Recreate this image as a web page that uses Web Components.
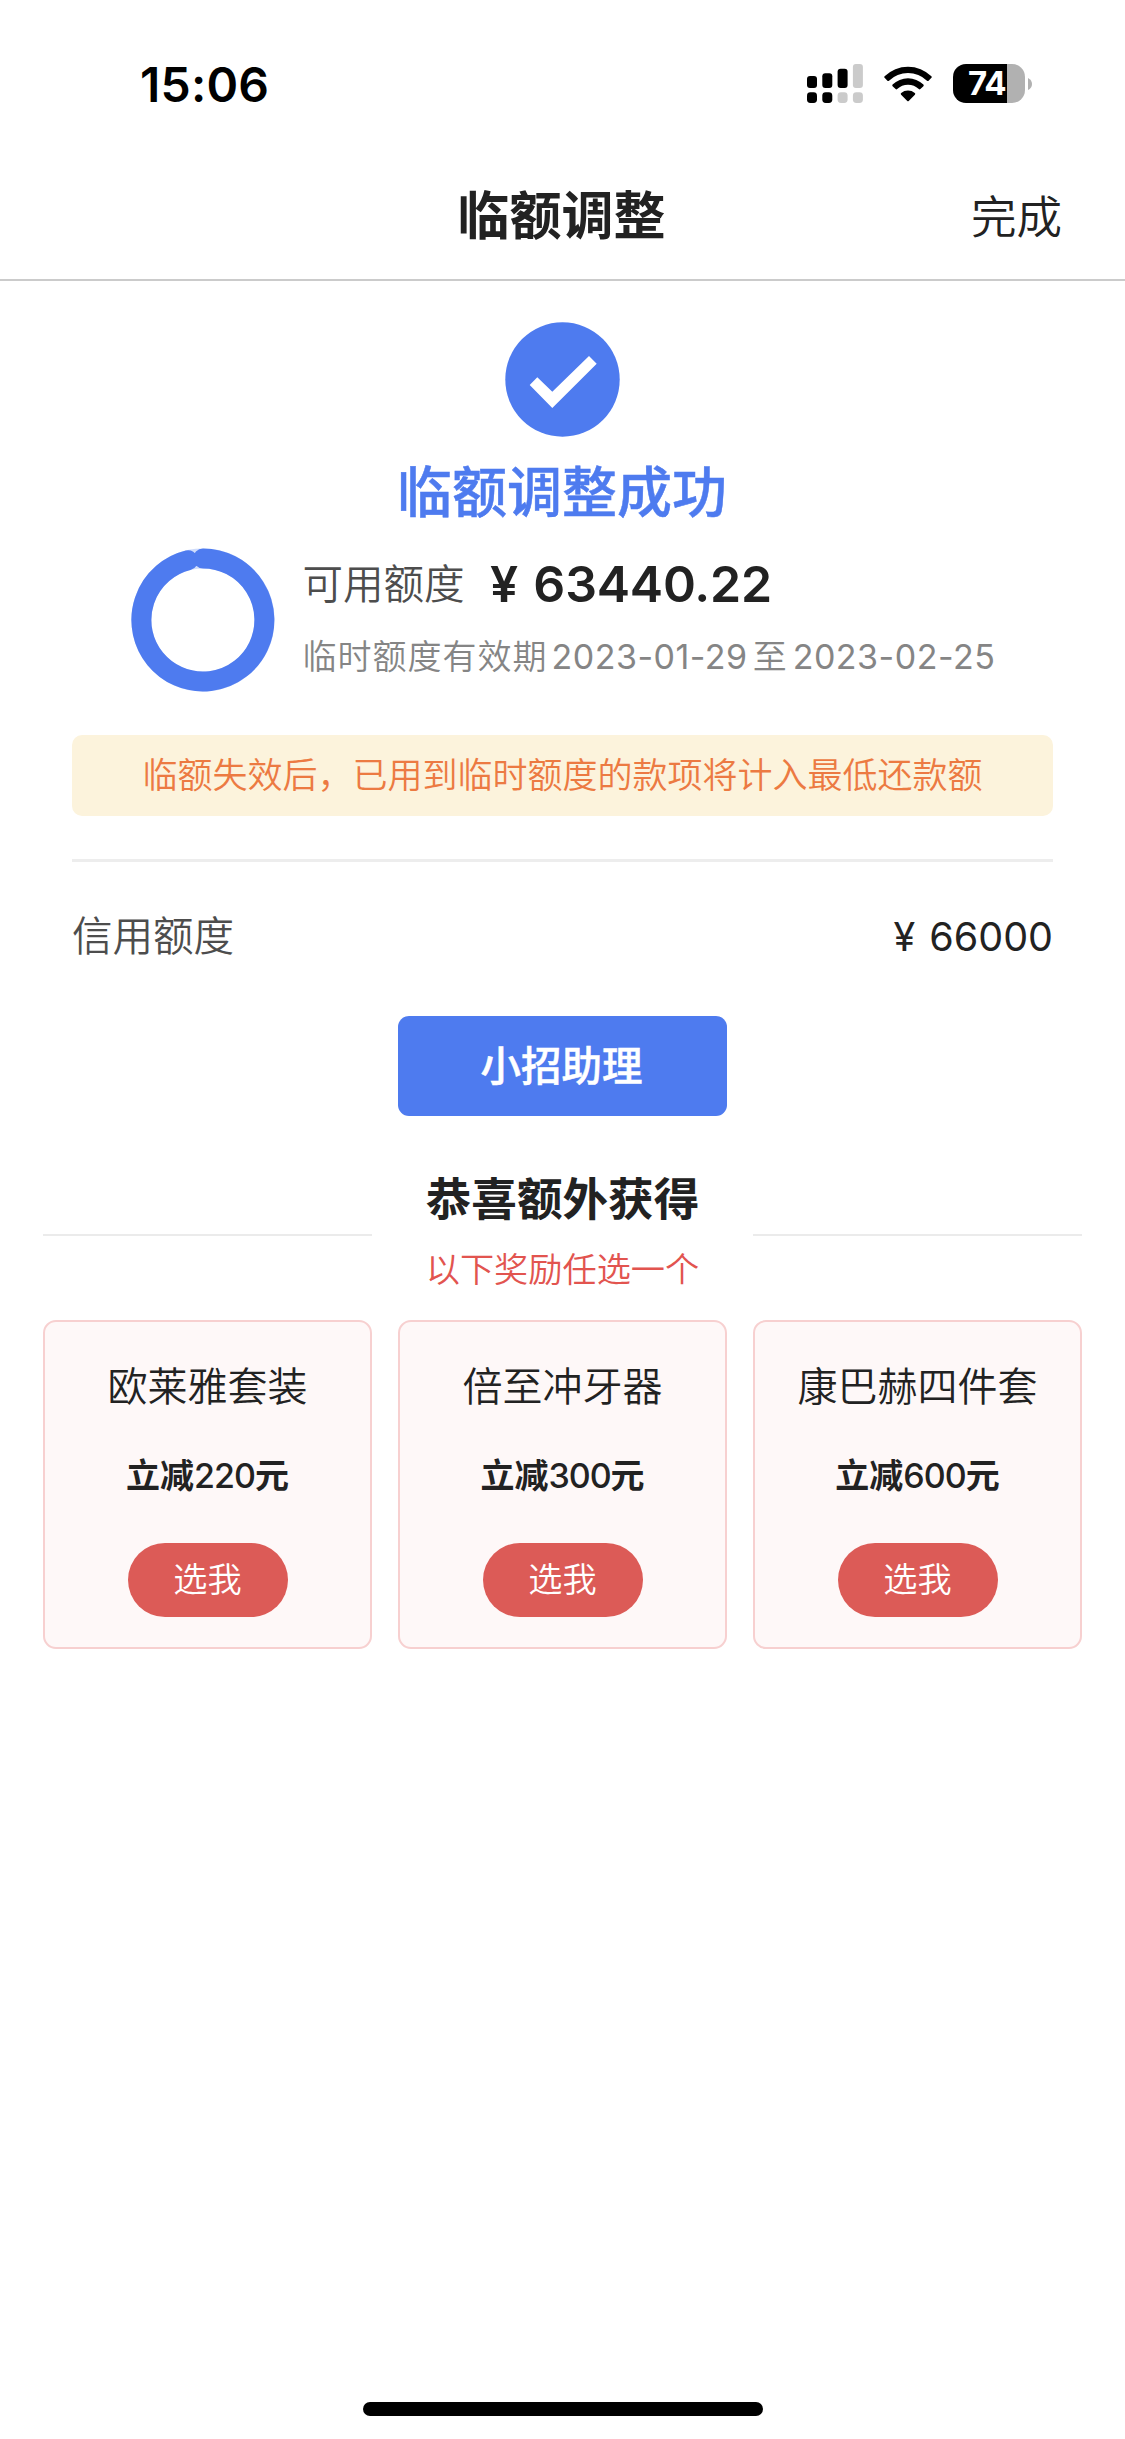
<!DOCTYPE html>
<html lang="zh-CN">
<head>
<meta charset="utf-8">
<title>临额调整</title>
<style>
  html, body { margin: 0; background: #fff; }
  body { font-family: Inter, "Noto Sans CJK SC", sans-serif; color: #222; }
</style>
</head>
<body>
<credit-app></credit-app>
<script>
const define = (name, html) => {
  const template = document.createElement('template');
  template.innerHTML = html;
  customElements.define(name, class extends HTMLElement {
    constructor() {
      super();
      this.attachShadow({ mode: 'open' }).append(template.content.cloneNode(true));
    }
  });
};

define('signal-icon', `
<style>:host{display:block;width:56px;height:40px}svg{display:block}</style>
<svg width="56" height="40" viewBox="0 0 56 40">
  <g fill="#000">
    <rect x="0" y="12" width="10" height="12" rx="3"/>
    <rect x="15.3" y="9.2" width="10" height="14.8" rx="3"/>
    <rect x="30.6" y="4.8" width="10" height="19.2" rx="3"/>
    <rect x="0" y="28.3" width="10" height="10.7" rx="3.4"/>
    <rect x="15.3" y="28.3" width="10" height="10.7" rx="3.4"/>
  </g>
  <g fill="#cbcbcb">
    <rect x="45.9" y="0" width="10" height="24" rx="3"/>
    <rect x="30.6" y="28.3" width="10" height="10.7" rx="3.4"/>
    <rect x="45.9" y="28.3" width="10" height="10.7" rx="3.4"/>
  </g>
</svg>`);

define('wifi-icon', `
<style>:host{display:block;width:48px;height:36px}svg{display:block}</style>
<svg width="48" height="36" viewBox="0 0 48 36">
  <path d="M0.6 10.2 A33.5 33.5 0 0 1 47.4 10.2 Q48.2 11 47.4 11.8 L44.6 14.7 Q43.8 15.4 43 14.7 A27.5 27.5 0 0 0 5 14.7 Q4.2 15.4 3.4 14.7 L0.6 11.8 Q-0.2 11 0.6 10.2Z"/>
  <path d="M8.6 18.6 A22 22 0 0 1 39.4 18.6 Q40.2 19.4 39.4 20.2 L36.4 23.1 Q35.6 23.8 34.8 23.1 A15.8 15.8 0 0 0 13.2 23.1 Q12.4 23.8 11.6 23.1 L8.6 20.2 Q7.8 19.4 8.6 18.6Z"/>
  <path d="M17.2 27 A10.6 10.6 0 0 1 30.8 27 Q31.8 27.8 30.9 28.7 L24.7 35 Q24 35.6 23.3 35 L17.1 28.7 Q16.2 27.8 17.2 27Z"/>
</svg>`);

define('battery-icon', `
<style>
:host{display:flex;align-items:center;gap:3px;height:39px}
.body{box-sizing:border-box;width:72px;height:39px;border-radius:13px;padding-left:15px;background:linear-gradient(90deg,#000 54px,#b1b1b1 54px);color:#fff;font:700 33px/39px Inter,sans-serif;letter-spacing:-1px}
svg{display:block}
</style>
<div class="body"><slot></slot></div>
<svg width="4" height="12" viewBox="0 0 4 12"><path d="M0 0Q4 2 4 6T0 12Z" fill="#b1b1b1"/></svg>`);

define('status-bar', `
<style>
:host{display:flex;box-sizing:border-box;height:151px;padding:64px 93px 0 140px;align-items:flex-start;color:#000}
.time{font-size:48px;line-height:41px;font-weight:600;margin-right:auto;letter-spacing:.2px}
signal-icon{margin-right:21px}
wifi-icon{margin:1.5px 21px 0 0}
</style>
<span class="time">15:06</span>
<signal-icon></signal-icon><wifi-icon></wifi-icon><battery-icon>74</battery-icon>`);

define('nav-bar', `
<style>
:host{display:grid;grid-template-columns:1fr auto 1fr;align-items:center;box-sizing:border-box;height:130px;padding:4px 63px 0;border-bottom:2px solid #cbcbcb}
.title{grid-column:2;font-size:52px;line-height:60px;font-weight:700;margin-right:2px}
.action{justify-self:end;font-size:45.5px;line-height:60px;font-weight:350;position:relative;top:1px}
</style>
<span class="title"><slot></slot></span><span class="action"><slot name="action"></slot></span>`);

define('success-banner', `
<style>
:host{display:flex;flex-direction:column;align-items:center;padding-top:41px}
svg{display:block}
.text{margin-top:23px;font-size:55px;line-height:64px;font-weight:500;color:#4e7bef;-webkit-text-stroke:.5px;margin-right:1px}
</style>
<svg width="115" height="115" viewBox="0 0 115 115"><circle cx="57.5" cy="57.5" r="57.2" fill="#4e7bef"/><path d="M24.7 63 L32.3 55.2 47.3 69.7 84 34 91.7 41.7 47.3 86Z" fill="#fff"/></svg>
<span class="text"><slot></slot></span>`);

define('quota-ring', `
<style>:host{display:block;width:144px;height:144px}svg{display:block}</style>
<svg width="144" height="144" viewBox="0 0 144 144" fill="none" stroke-width="20">
  <circle cx="72" cy="72" r="61.5" stroke="#cfdcfb"/>
  <path d="M72 10.5 A61.5 61.5 0 1 1 57.1 12.3" stroke="#4e7bef" stroke-linecap="round"/>
</svg>`);

define('quota-summary', `
<style>
:host{display:flex;padding:24px 0 0 130.5px;gap:28px}
.info{display:flex;flex-direction:column}
.line{display:flex;height:73px;line-height:73px;white-space:pre}
.label{font-size:40.5px;color:#4d4d4d;width:187.5px;font-weight:350}
.amount{font-size:50px;font-weight:600;word-spacing:3px;letter-spacing:-.2px}
.period{height:71px;line-height:71px;font-size:34px;color:#858585;letter-spacing:1px;font-weight:350}
</style>
<quota-ring></quota-ring>
<div class="info">
  <div class="line"><span class="label"><slot name="label"></slot></span><span class="amount"><slot name="amount"></slot></span></div>
  <div class="line period"><slot name="period"></slot></div>
</div>`);

define('notice-bar', `
<style>
:host{display:block;margin:43px 72px 0;height:81px;line-height:81px;border-radius:10px;background:#fcf3dc;color:#ec7a42;font-size:35px;font-weight:350;text-align:center;white-space:nowrap}
</style><slot></slot>`);

define('credit-row', `
<style>
:host{display:flex;justify-content:space-between;box-sizing:border-box;margin:43px 72px 0;height:157px;padding-top:43px;border-top:3px solid #ededed;line-height:64px;white-space:pre}
.label{font-size:40.5px;color:#4d4d4d;font-weight:350}
.value{font-size:39.5px;word-spacing:3px}
</style><span class="label"><slot></slot></span><span class="value"><slot name="value"></slot></span>`);

define('primary-button', `
<style>
:host{display:block;margin:0 auto;width:329px;height:100px;line-height:101px;border-radius:11px;background:#4e7bef;color:#fff;font-size:40.5px;font-weight:500;-webkit-text-stroke:.5px;text-align:center;text-indent:-2px}
</style><slot></slot>`);

define('reward-heading', `
<style>
:host{display:grid;grid-template-columns:repeat(3,329px);gap:26px;justify-content:center;align-items:center;margin-top:46px;height:145px}
.rule{height:2px;background:#ebebeb}
.mid{display:flex;flex-direction:column;align-items:center;line-height:70px;white-space:nowrap}
.main{font-size:45.6px;font-weight:700}
.sub{font-size:34.2px;color:#e2544f;font-weight:350}
</style>
<div class="rule"></div>
<div class="mid"><span class="main"><slot></slot></span><span class="sub"><slot name="sub"></slot></span></div>
<div class="rule"></div>`);

define('reward-card', `
<style>
:host{display:flex;flex-direction:column;align-items:center;box-sizing:border-box;width:329px;height:329px;padding-top:35px;border:2px solid #f7d0d0;border-radius:13px;background:#fef8f8;white-space:nowrap}
.name{font-size:40px;line-height:60px;font-weight:350}
.price{margin-top:33px;font-size:34px;line-height:51px;font-weight:600}
.pick{margin-top:42px;width:160px;height:74px;line-height:73px;border-radius:37px;background:#dc5b57;color:#fff;font-size:34.2px;font-weight:350;text-align:center}
</style>
<span class="name"><slot></slot></span>
<span class="price"><slot name="price"></slot></span>
<div class="pick">选我</div>`);

define('reward-list', `
<style>:host{display:flex;gap:26px;justify-content:center;margin-top:13px}</style><slot></slot>`);

define('home-indicator', `
<style>:host{display:block;width:400px;height:14px;border-radius:7px;background:#000;margin:auto auto 23px}</style>`);

define('credit-app', `
<style>
:host{display:flex;flex-direction:column;width:1125px;height:2439px;overflow:hidden;background:#fff}
.date{font-weight:400;letter-spacing:.5px}
.num{font-weight:500;letter-spacing:-1px}
</style>
<status-bar></status-bar>
<nav-bar>临额调整<span slot="action">完成</span></nav-bar>
<success-banner>临额调整成功</success-banner>
<quota-summary>
  <span slot="label">可用额度</span>
  <span slot="amount">¥ 63440.22</span>
  <span slot="period">临时额度有效期<span class="date" style="margin:0 5px 0 4px">2023-01-29</span>至<span class="date" style="margin-left:5px">2023-02-25</span></span>
</quota-summary>
<notice-bar>临额失效后，已用到临时额度的款项将计入最低还款额</notice-bar>
<credit-row>信用额度<span slot="value">¥ 66000</span></credit-row>
<primary-button>小招助理</primary-button>
<reward-heading>恭喜额外获得<span slot="sub">以下奖励任选一个</span></reward-heading>
<reward-list>
  <reward-card>欧莱雅套装<span slot="price">立减<span class="num">220</span>元</span></reward-card>
  <reward-card>倍至冲牙器<span slot="price">立减<span class="num">300</span>元</span></reward-card>
  <reward-card>康巴赫四件套<span slot="price">立减<span class="num">600</span>元</span></reward-card>
</reward-list>
<home-indicator></home-indicator>`);
</script>
</body>
</html>
